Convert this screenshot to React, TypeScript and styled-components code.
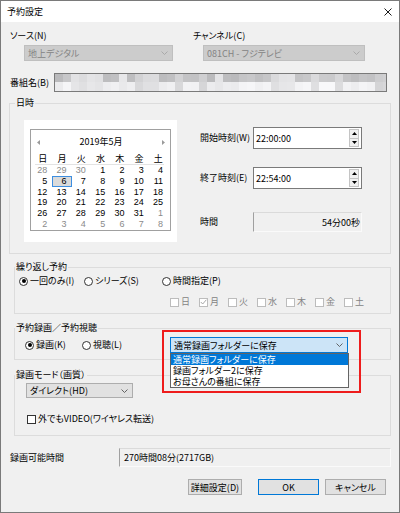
import React from 'react';
import styled, { createGlobalStyle } from 'styled-components';

const GlobalStyle = createGlobalStyle`
  html, body {
    margin: 0;
    padding: 0;
    background: #f0f0f0;
  }
  body {
    font-family: "Noto Sans CJK JP", "Noto Sans", sans-serif;
    font-size: 9px;
    font-feature-settings: "palt" 1;
    color: #000;
  }
  * {
    box-sizing: border-box;
  }
`;

const Window = styled.div`
  width: 400px;
  height: 513px;
  border: 1px solid #7a7a7a;
  background: #f0f0f0;
  display: flex;
  flex-direction: column;
  overflow: hidden;
`;

const TitleBar = styled.div`
  height: 21px;
  flex-shrink: 0;
  background: #fff;
  display: flex;
  align-items: center;
  justify-content: space-between;
  padding: 0 7px 0 6px;
  line-height: 12px;
`;

const Body = styled.div`
  display: flex;
  flex-direction: column;
  padding: 8px 8px 0 8px;
`;

const TopRow = styled.div`
  display: flex;
`;

const Field = styled.div<{ $w?: number }>`
  display: flex;
  flex-direction: column;
  width: ${p => (p.$w ? `${p.$w}px` : 'auto')};
`;

const Label = styled.div<{ $w?: number; $grey?: boolean }>`
  line-height: 12px;
  padding-left: 1px;
  white-space: nowrap;
  flex-shrink: 0;
  width: ${p => (p.$w ? `${p.$w}px` : 'auto')};
  color: ${p => (p.$grey ? '#838383' : '#000')};
`;

const Combo = styled.div<{ $w: number; $h?: number; $variant?: 'disabled' | 'normal' | 'focus'; $ml?: number; $mt?: number }>`
  width: ${p => p.$w}px;
  height: ${p => p.$h ?? 16}px;
  margin-left: ${p => p.$ml ?? 0}px;
  margin-top: ${p => p.$mt ?? 0}px;
  display: flex;
  align-items: center;
  justify-content: space-between;
  padding: 0 4px 0 3px;
  white-space: nowrap;
  flex-shrink: 0;
  background: ${p => (p.$variant === 'disabled' ? '#cccccc' : p.$variant === 'focus' ? '#cce4f7' : '#e1e1e1')};
  border: 1px solid ${p => (p.$variant === 'disabled' ? '#bfbfbf' : p.$variant === 'focus' ? '#0078d7' : '#adadad')};
  color: ${p => (p.$variant === 'disabled' ? '#838383' : '#000')};
`;

const ProgramRow = styled.div`
  display: flex;
  align-items: center;
  margin-top: 12px;
`;

const Mosaic = styled.div`
  width: 333px;
  height: 19px;
  border: 1px solid #7a7a7a;
  background: #fff;
  display: grid;
  grid-template-columns: repeat(42, 8px);
  grid-template-rows: 8px 9px;
  overflow: hidden;
`;

const Group = styled.fieldset<{ $ml?: number; $w: number; $mt: number }>`
  margin: ${p => p.$mt}px 0 0 ${p => p.$ml ?? 0}px;
  width: ${p => p.$w}px;
  min-width: 0;
  padding: 0;
  border: 1px solid #dcdcdc;
`;

const Legend = styled.legend<{ $ml?: number }>`
  padding: 0 1px;
  margin-left: ${p => p.$ml ?? 0}px;
  line-height: 12px;
`;

const DateBody = styled.div`
  display: flex;
  align-items: flex-start;
  padding: 11px 0 11px 14px;
`;

const CalendarPanel = styled.div`
  width: 153px;
  height: 122px;
  background: #fff;
  padding: 9px 6px 0 6px;
`;

const CalendarBox = styled.div`
  width: 141px;
  height: 102px;
  border: 1px solid #a0a0a0;
  padding: 6px 2px 0 2px;
`;

const CalHeader = styled.div`
  height: 12px;
  line-height: 12px;
  display: flex;
  align-items: center;
  justify-content: space-between;
  padding: 0 3px 0 4px;
`;

const DayGrid = styled.div<{ $mt?: number }>`
  display: grid;
  grid-template-columns: repeat(7, 1fr);
  margin-top: ${p => p.$mt ?? 0}px;
`;

const DayName = styled.div`
  text-align: center;
  line-height: 11px;
`;

const Separator = styled.div`
  height: 1px;
  margin: 0 4px 0 2px;
  background: #e3e3e3;
`;

const DateCell = styled.div<{ $other?: boolean; $selected?: boolean }>`
  height: 10.8px;
  line-height: 10.8px;
  font-family: "Liberation Sans", Arial, sans-serif;
  font-size: 9px;
  text-align: right;
  padding-right: 5px;
  color: ${p => (p.$other ? '#8a8a8a' : '#000')};
  background: ${p => (p.$selected ? '#dadada' : 'transparent')};
  box-shadow: ${p => (p.$selected ? 'inset 0 0 0 1px #3d8ee0' : 'none')};
`;

const RightCol = styled.div`
  display: flex;
  flex-direction: column;
  margin-left: 22px;
  padding-top: 7px;
`;

const TimeRow = styled.div<{ $mt?: number }>`
  display: flex;
  align-items: center;
  margin-top: ${p => p.$mt ?? 0}px;
`;

const TimeInput = styled.div`
  width: 109px;
  height: 22px;
  border: 1px solid #7a7a7a;
  background: #fff;
  display: flex;
  align-items: center;
  padding-left: 2px;
`;

const Spin = styled.div`
  margin-left: auto;
  margin-right: 2px;
  width: 10px;
  height: 18px;
  display: flex;
  flex-direction: column;
  border: 1px solid #c4c4c4;
`;

const SpinHalf = styled.div<{ $top?: boolean }>`
  flex: 1;
  display: flex;
  align-items: center;
  justify-content: center;
  background: #f0f0f0;
  border-top: ${p => (p.$top ? 'none' : '1px solid #c4c4c4')};
`;

const StaticBox = styled.div<{ $w: number; $h: number; $right?: boolean }>`
  width: ${p => p.$w}px;
  height: ${p => p.$h}px;
  display: flex;
  align-items: center;
  justify-content: ${p => (p.$right ? 'flex-end' : 'flex-start')};
  padding: ${p => (p.$right ? '0 1px 0 0' : '0 0 0 4px')};
  border-top: 1px solid #dadada;
  border-left: 1px solid #a0a0a0;
  border-right: 1px solid #fafafa;
  border-bottom: 1px solid #fafafa;
  white-space: nowrap;
`;

const OptionRow = styled.div<{ $pl: number; $mt?: number; $mb?: number; $h?: number }>`
  display: flex;
  align-items: center;
  padding-left: ${p => p.$pl}px;
  margin-top: ${p => p.$mt ?? 0}px;
  margin-bottom: ${p => p.$mb ?? 0}px;
  height: ${p => p.$h ?? 12}px;
`;

const OptionItem = styled.div<{ $w?: number; $grey?: boolean }>`
  display: flex;
  align-items: center;
  gap: 2px;
  width: ${p => (p.$w ? `${p.$w}px` : 'auto')};
  flex-shrink: 0;
  white-space: nowrap;
  line-height: 12px;
  color: ${p => (p.$grey ? '#838383' : '#000')};
`;

const RadioDot = styled.span<{ $checked?: boolean }>`
  width: 9px;
  height: 9px;
  border-radius: 50%;
  border: 1px solid #333;
  background: #fff;
  display: inline-flex;
  align-items: center;
  justify-content: center;
  flex-shrink: 0;

  &::after {
    content: '';
    width: 4px;
    height: 4px;
    border-radius: 50%;
    background: ${p => (p.$checked ? '#000' : 'transparent')};
  }
`;

const CheckBox = styled.span<{ $disabled?: boolean }>`
  width: 9px;
  height: 9px;
  border: 1px solid ${p => (p.$disabled ? '#bcbcbc' : '#333')};
  background: #fff;
  display: inline-flex;
  align-items: center;
  justify-content: center;
  flex-shrink: 0;
`;

const Anchor = styled.div`
  position: relative;
`;

const DropList = styled.div`
  position: absolute;
  top: 16px;
  left: 0;
  width: 179px;
  border: 1px solid #646464;
  background: #fff;
  z-index: 2;
`;

const DropItem = styled.div<{ $active?: boolean }>`
  height: 11px;
  line-height: 11px;
  padding-left: 2px;
  white-space: nowrap;
  background: ${p => (p.$active ? '#0078d7' : '#fff')};
  color: ${p => (p.$active ? '#fff' : '#000')};
`;

const Highlight = styled.div`
  position: absolute;
  left: -8px;
  top: -7px;
  width: 199px;
  height: 63px;
  border: 2px solid #ee1c1c;
  z-index: 3;
  pointer-events: none;
`;

const CapacityRow = styled.div`
  display: flex;
  align-items: center;
  margin-top: 12px;
`;

const ButtonRow = styled.div`
  display: flex;
  justify-content: flex-end;
  margin: 12px 5px 0 0;
`;

const Button = styled.div<{ $w: number; $ml?: number; $default?: boolean }>`
  width: ${p => p.$w}px;
  height: 16px;
  margin-left: ${p => p.$ml ?? 0}px;
  display: flex;
  align-items: center;
  justify-content: center;
  background: #e1e1e1;
  border: 1px solid ${p => (p.$default ? '#0078d7' : '#adadad')};
  white-space: nowrap;
`;

const Chevron = ({ color = '#6d6d6d' }: { color?: string }) => (
  <svg width="7" height="4" viewBox="0 0 7 4">
    <polyline points="0.5,0.5 3.5,3.5 6.5,0.5" fill="none" stroke={color} strokeWidth="0.9" />
  </svg>
);

const Arrow = ({ dir }: { dir: 'left' | 'right' }) => (
  <svg width="3" height="5" viewBox="0 0 3 5">
    <polygon points={dir === 'left' ? '3,0 0,2.5 3,5' : '0,0 3,2.5 0,5'} fill="#9a9a9a" />
  </svg>
);

const Tri = ({ up }: { up?: boolean }) => (
  <svg width="5" height="3" viewBox="0 0 5 3">
    <polygon points={up ? '0,3 2.5,0 5,3' : '0,0 2.5,3 5,0'} fill="#000" />
  </svg>
);

const Check = () => (
  <svg width="7" height="6" viewBox="0 0 7 6">
    <polyline points="0.8,3 2.7,5 6.3,0.8" fill="none" stroke="#a8a8a8" strokeWidth="1" />
  </svg>
);

const weeks: number[][] = [
  [28, 29, 30, 1, 2, 3, 4],
  [5, 6, 7, 8, 9, 10, 11],
  [12, 13, 14, 15, 16, 17, 18],
  [19, 20, 21, 22, 23, 24, 25],
  [26, 27, 28, 29, 30, 31, 1],
  [2, 3, 4, 5, 6, 7, 8],
];

const dayNames = ['日', '月', '火', '水', '木', '金', '土'];

// blurred program title, two rows of grey blocks
const mosaic = Array.from({ length: 84 }, (_, i) => {
  const row = i < 42 ? 0 : 1;
  const col = i % 42;
  const n = (col * 53 + row * 29 + ((col * col) % 17) * 7) % 47;
  const v = row === 0 ? 186 + n : 212 + Math.floor(n * 0.8);
  return `rgb(${v},${v},${Math.min(255, v + 2)})`;
});

const Calendar: React.FC = () => (
  <CalendarPanel>
    <CalendarBox>
      <CalHeader>
        <Arrow dir="left" />
        <span>2019年5月</span>
        <Arrow dir="right" />
      </CalHeader>
      <DayGrid $mt={5}>
        {dayNames.map(d => (
          <DayName key={d}>{d}</DayName>
        ))}
      </DayGrid>
      <Separator />
      <DayGrid>
        {weeks.map((week, w) =>
          week.map((d, i) => (
            <DateCell
              key={`${w}-${i}`}
              $other={(w === 0 && d > 20) || (w >= 4 && d < 10)}
              $selected={w === 1 && d === 6}
            >
              {d}
            </DateCell>
          ))
        )}
      </DayGrid>
    </CalendarBox>
  </CalendarPanel>
);

const TimeField: React.FC<{ value: string }> = ({ value }) => (
  <TimeInput>
    <span>{value}</span>
    <Spin>
      <SpinHalf $top>
        <Tri up />
      </SpinHalf>
      <SpinHalf>
        <Tri />
      </SpinHalf>
    </Spin>
  </TimeInput>
);

const App: React.FC = () => {
  return (
    <>
      <GlobalStyle />
      <Window>
        <TitleBar>
          <span>予約設定</span>
          <svg width="8" height="8" viewBox="0 0 8 8">
            <path d="M0.5 0.5 L7.5 7.5 M7.5 0.5 L0.5 7.5" stroke="#000" strokeWidth="0.9" />
          </svg>
        </TitleBar>
        <Body>
          <TopRow>
            <Field $w={183}>
              <Label>ソース(N)</Label>
              <Combo $w={149} $ml={15} $mt={3} $variant="disabled">
                <span>地上デジタル</span>
                <Chevron color="#a5a5a5" />
              </Combo>
            </Field>
            <Field>
              <Label>チャンネル(C)</Label>
              <Combo $w={162} $ml={11} $mt={3} $variant="disabled">
                <span>081CH - フジテレビ</span>
                <Chevron color="#a5a5a5" />
              </Combo>
            </Field>
          </TopRow>

          <ProgramRow>
            <Label $w={45}>番組名(B)</Label>
            <Mosaic aria-label="番組名">
              {mosaic.map((c, i) => (
                <span key={i} style={{ background: c }} />
              ))}
            </Mosaic>
          </ProgramRow>

          <Group $w={382} $mt={5}>
            <Legend $ml={5}>日時</Legend>
            <DateBody>
              <Calendar />
              <RightCol>
                <TimeRow>
                  <Label $w={54}>開始時刻(W)</Label>
                  <TimeField value="22:00:00" />
                </TimeRow>
                <TimeRow $mt={18}>
                  <Label $w={54}>終了時刻(E)</Label>
                  <TimeField value="22:54:00" />
                </TimeRow>
                <TimeRow $mt={23}>
                  <Label $w={54}>時間</Label>
                  <StaticBox $w={109} $h={20} $right>54分00秒</StaticBox>
                </TimeRow>
              </RightCol>
            </DateBody>
          </Group>

          <Group $w={377} $ml={5} $mt={7}>
            <Legend>繰り返し予約</Legend>
            <OptionRow $pl={4} $mt={2}>
              <OptionItem $w={65}>
                <RadioDot $checked />
                一回のみ(I)
              </OptionItem>
              <OptionItem $w={78}>
                <RadioDot />
                シリーズ(S)
              </OptionItem>
              <OptionItem>
                <RadioDot />
                時間指定(P)
              </OptionItem>
            </OptionRow>
            <OptionRow $pl={155} $mt={9} $mb={5}>
              {dayNames.map(d => (
                <OptionItem key={d} $w={29} $grey>
                  <CheckBox $disabled>{d === '月' && <Check />}</CheckBox>
                  {d}
                </OptionItem>
              ))}
            </OptionRow>
          </Group>

          <Group $w={377} $ml={5} $mt={8}>
            <Legend>予約録画／予約視聴</Legend>
            <OptionRow $pl={10} $mt={3} $mb={6} $h={16}>
              <OptionItem $w={57}>
                <RadioDot $checked />
                録画(K)
              </OptionItem>
              <OptionItem $w={88}>
                <RadioDot />
                視聴(L)
              </OptionItem>
              <Anchor>
                <Combo $w={178} $variant="focus">
                  <span>通常録画フォルダーに保存</span>
                  <Chevron color="#555" />
                </Combo>
                <DropList>
                  <DropItem $active>通常録画フォルダーに保存</DropItem>
                  <DropItem>録画フォルダー2に保存</DropItem>
                  <DropItem>お母さんの番組に保存</DropItem>
                </DropList>
                <Highlight />
              </Anchor>
            </OptionRow>
          </Group>

          <Group $w={377} $ml={5} $mt={9}>
            <Legend>録画モード（画質）</Legend>
            <Combo $w={107} $h={15} $ml={11} $mt={2}>
              <span>ダイレクト(HD)</span>
              <Chevron color="#555" />
            </Combo>
            <OptionRow $pl={12} $mt={15} $mb={10}>
              <OptionItem>
                <CheckBox />
                外でもVIDEO(ワイヤレス転送)
              </OptionItem>
            </OptionRow>
          </Group>

          <CapacityRow>
            <Label $w={110}>録画可能時間</Label>
            <StaticBox $w={272} $h={19}>270時間08分(2717GB)</StaticBox>
          </CapacityRow>

          <ButtonRow>
            <Button $w={54}>詳細設定(D)</Button>
            <Button $w={61} $ml={16} $default>OK</Button>
            <Button $w={61} $ml={6}>キャンセル</Button>
          </ButtonRow>
        </Body>
      </Window>
    </>
  );
};

export default App;
